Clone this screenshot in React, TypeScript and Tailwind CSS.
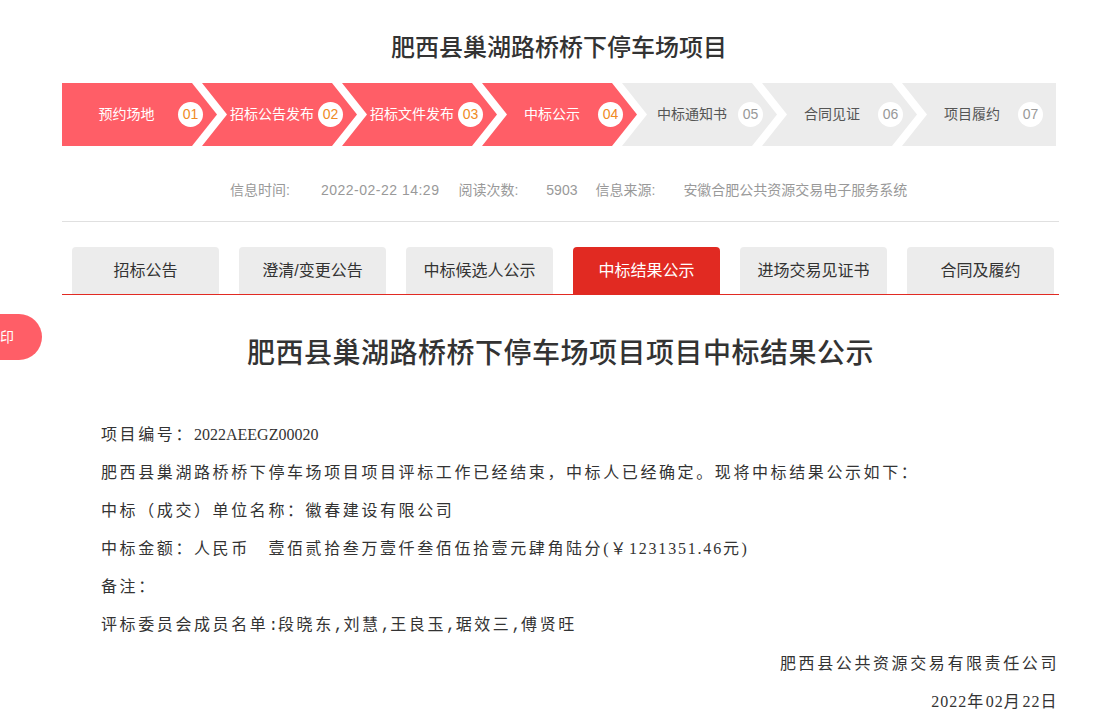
import clsx from "clsx";

const steps = [
  { title: "预约场地", num: "01", done: true },
  { title: "招标公告发布", num: "02", done: true },
  { title: "招标文件发布", num: "03", done: true },
  { title: "中标公示", num: "04", done: true },
  { title: "中标通知书", num: "05", done: false },
  { title: "合同见证", num: "06", done: false },
  { title: "项目履约", num: "07", done: false },
];

const tabs = ["招标公告", "澄清/变更公告", "中标候选人公示", "中标结果公示", "进场交易见证书", "合同及履约"];

const CLIP_FIRST = "[clip-path:polygon(0_0,130px_0,155px_50%,130px_100%,0_100%)]";
const CLIP_MID = "[clip-path:polygon(0_0,130px_0,155px_50%,130px_100%,0_100%,25px_50%)]";
const CLIP_LAST = "[clip-path:polygon(0_0,100%_0,100%_100%,0_100%,25px_50%)]";

function StepBar() {
  return (
    <div className="flex w-[994px]">
      {steps.map((s, i) => {
        const first = i === 0;
        const last = i === steps.length - 1;
        return (
          <div
            key={s.num}
            className={clsx(
              "flex h-[63px] items-center",
              first ? CLIP_FIRST : last ? CLIP_LAST : CLIP_MID,
              last ? "flex-1" : "w-[155px] shrink-0",
              !first && "-ml-[15px]",
              s.done ? "bg-[#ff5e67] text-white" : "bg-[#ececec] text-[#555]"
            )}
          >
            <span className={clsx("w-[116px] text-center text-[14px] whitespace-nowrap", first ? "pl-[13px]" : "pl-[24px]")}>
              {s.title}
            </span>
            <span
              className={clsx(
                "flex h-[25px] w-[25px] items-center justify-center rounded-full bg-white text-[14px]",
                s.done ? "text-[#f08a24]" : "text-[#999]"
              )}
            >
              {s.num}
            </span>
          </div>
        );
      })}
    </div>
  );
}

// 半角标点，宋体里占半个字宽
function P({ c }: { c: string }) {
  return <span className="font-['Liberation_Mono',monospace] tracking-normal">{c}</span>;
}

export default function App() {
  const active = 3;

  return (
    <div className="relative min-h-screen bg-white font-['Liberation_Sans','Noto_Sans_CJK_SC',sans-serif]">
      {/* 打印按钮 */}
      <button className="absolute left-[-42px] top-[314px] flex h-[46px] w-[84px] items-center justify-center rounded-full bg-[#ff5e67] text-[14px] text-white">
        打印
      </button>

      <div className="ml-[62px] w-[997px]">
        <h1 className="w-[994px] pt-[33px] text-center font-['Liberation_Serif','Noto_Sans_CJK_SC',serif] text-[24px] leading-[30px] font-medium text-[#333]">
          肥西县巢湖路桥桥下停车场项目
        </h1>

        <div className="mt-[20px]">
          <StepBar />
        </div>

        {/* 信息 */}
        <div className="flex h-[75px] items-center pt-[14px] pl-[168px] text-[14px] text-[#999]">
          <span className="mr-[31px]">信息时间:</span>
          <span className="mr-[19px] tracking-[0.5px]">2022-02-22 14:29</span>
          <span className="mr-[28px]">阅读次数:</span>
          <span className="mr-[18px]">5903</span>
          <span className="mr-[28px]">信息来源:</span>
          <span>安徽合肥公共资源交易电子服务系统</span>
        </div>

        <div className="h-px bg-[#e0e0e0]" />

        {/* 标签 */}
        <div className="mt-[25px] flex gap-[20px] border-b border-[#e12a22] pl-[10px]">
          {tabs.map((t, i) => (
            <div
              key={t}
              className={clsx(
                "flex h-[47px] w-[147px] items-center justify-center rounded-t-[4px] text-[16px]",
                i === active ? "bg-[#e12a22] text-white" : "bg-[#ececec] text-[#333]"
              )}
            >
              {t}
            </div>
          ))}
        </div>

        <h2 className="mt-[41px] text-center font-['Liberation_Serif','Noto_Sans_CJK_SC',serif] text-[28px] leading-[36px] font-medium tracking-[0.5px] text-[#333]">
          肥西县巢湖路桥桥下停车场项目项目中标结果公示
        </h2>

        <div className="mt-[44px] pl-[39px] font-['Liberation_Serif','Noto_Sans_CJK_SC',serif] text-[16px] leading-[38px] tracking-[2.6px] text-[#333]">
          <p>
            项目编号：<span className="tracking-normal">2022AEEGZ00020</span>
          </p>
          <p>肥西县巢湖路桥桥下停车场项目项目评标工作已经结束，中标人已经确定。现将中标结果公示如下：</p>
          <p>中标（成交）单位名称：徽春建设有限公司</p>
          <p>
            中标金额：人民币　壹佰贰拾叁万壹仟叁佰伍拾壹元肆角陆分
            <span className="tracking-[1.8px]">(</span>￥<span className="tracking-[1.8px]">1231351.46</span>元
            <span className="tracking-[1.8px]">)</span>
          </p>
          <p>备注：</p>
          <p>
            评标委员会成员名单<P c=":" />段晓东<P c="," />刘慧<P c="," />王良玉<P c="," />琚效三<P c="," />傅贤旺
          </p>
          <p className="text-right">肥西县公共资源交易有限责任公司</p>
          <p className="text-right">
            <span className="tracking-[1px]">2022</span>年<span className="tracking-[1px]">02</span>月
            <span className="tracking-[1px]">22</span>日
          </p>
        </div>
      </div>
    </div>
  );
}
